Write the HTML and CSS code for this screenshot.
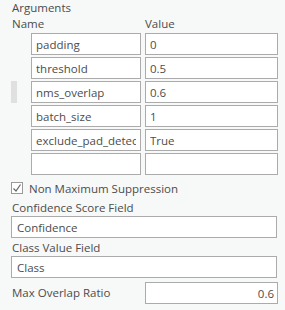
FILE: index.html
```html
<!DOCTYPE html>
<html lang="en">
<head>
    <meta charset="UTF-8">
    <title>Arguments</title>
    <link rel="stylesheet" href="styles.css">
</head>
<body>
    <div class="panel">
        <div class="section-title">Arguments</div>

        <div class="args-table">
            <div class="col-head col-name">Name</div>
            <div class="col-head col-value">Value</div>

            <div class="gutter"></div>
            <input class="cell" value="padding">
            <input class="cell" value="0">

            <div class="gutter"></div>
            <input class="cell" value="threshold">
            <input class="cell" value="0.5">

            <div class="gutter"><span class="row-select"></span></div>
            <input class="cell" value="nms_overlap">
            <input class="cell" value="0.6">

            <div class="gutter"></div>
            <input class="cell" value="batch_size">
            <input class="cell" value="1">

            <div class="gutter"></div>
            <input class="cell" value="exclude_pad_detections">
            <input class="cell" value="True">

            <div class="gutter"></div>
            <input class="cell" value="">
            <input class="cell" value="">
        </div>

        <label class="check-row">
            <span class="check-box">
                <svg width="10" height="10" viewBox="0 0 10 10" fill="none" stroke="#6b6b6b" stroke-width="1.3">
                    <polyline points="1.5 5.5 4 8 8.5 1.5"></polyline>
                </svg>
            </span>
            Non Maximum Suppression
        </label>

        <div class="field">
            <div class="field-label">Confidence Score Field</div>
            <input class="text-input" value="Confidence">
        </div>

        <div class="field">
            <div class="field-label">Class Value Field</div>
            <input class="text-input" value="Class">
        </div>

        <div class="inline-field">
            <div class="field-label">Max Overlap Ratio</div>
            <input class="text-input number" value="0.6">
        </div>
    </div>
</body>
</html>
```

FILE: styles.css
```css
* {
    margin: 0;
    padding: 0;
    box-sizing: border-box;
}

:root {
    --background: #f7f8f8;
    --surface: #ffffff;
    --text: #4c4c4c;
    --border: #ababab;
    --select: #e0e0e0;
}

body {
    font-family: "Open Sans", "Noto Sans", sans-serif;
    font-size: 11.5px;
    background: var(--background);
    color: var(--text);
}

.panel {
    padding: 0 8px 0 11px;
}

.section-title {
    height: 16px;
    line-height: 16px;
    padding-left: 1px;
}

.args-table {
    display: grid;
    grid-template-columns: 16px 110px 133px;
    grid-template-rows: 15px;
    grid-auto-rows: 22px;
    column-gap: 4px;
    row-gap: 2px;
}

.col-head {
    line-height: 15px;
}

.col-name {
    grid-column: 1 / 3;
    padding-left: 1px;
}

.col-value {
    grid-column: 3;
}

.row-select {
    display: block;
    width: 6px;
    height: 22px;
    background: var(--select);
}

.cell,
.text-input {
    font: inherit;
    color: var(--text);
    background: var(--surface);
    border: 1px solid var(--border);
    border-radius: 0;
    height: 22px;
    padding: 0 4px;
    outline: none;
    width: 100%;
    min-width: 0;
}

.text-input {
    padding: 0 5px;
}

.check-row {
    display: flex;
    align-items: center;
    gap: 6px;
    height: 12px;
    margin: 7px 0 4px;
}

.check-box {
    width: 12px;
    height: 12px;
    border: 1px solid #9a9a9a;
    background: var(--surface);
    display: flex;
    align-items: center;
    justify-content: center;
}

.field-label {
    height: 18px;
    line-height: 16px;
    padding-top: 2px;
    padding-left: 1px;
}

.inline-field {
    display: grid;
    grid-template-columns: 134px 133px;
    align-items: center;
    margin-top: 4px;
}

.inline-field .field-label {
    height: 16px;
    padding-top: 0;
}

.text-input.number {
    text-align: right;
    padding: 0 3px;
}
```
